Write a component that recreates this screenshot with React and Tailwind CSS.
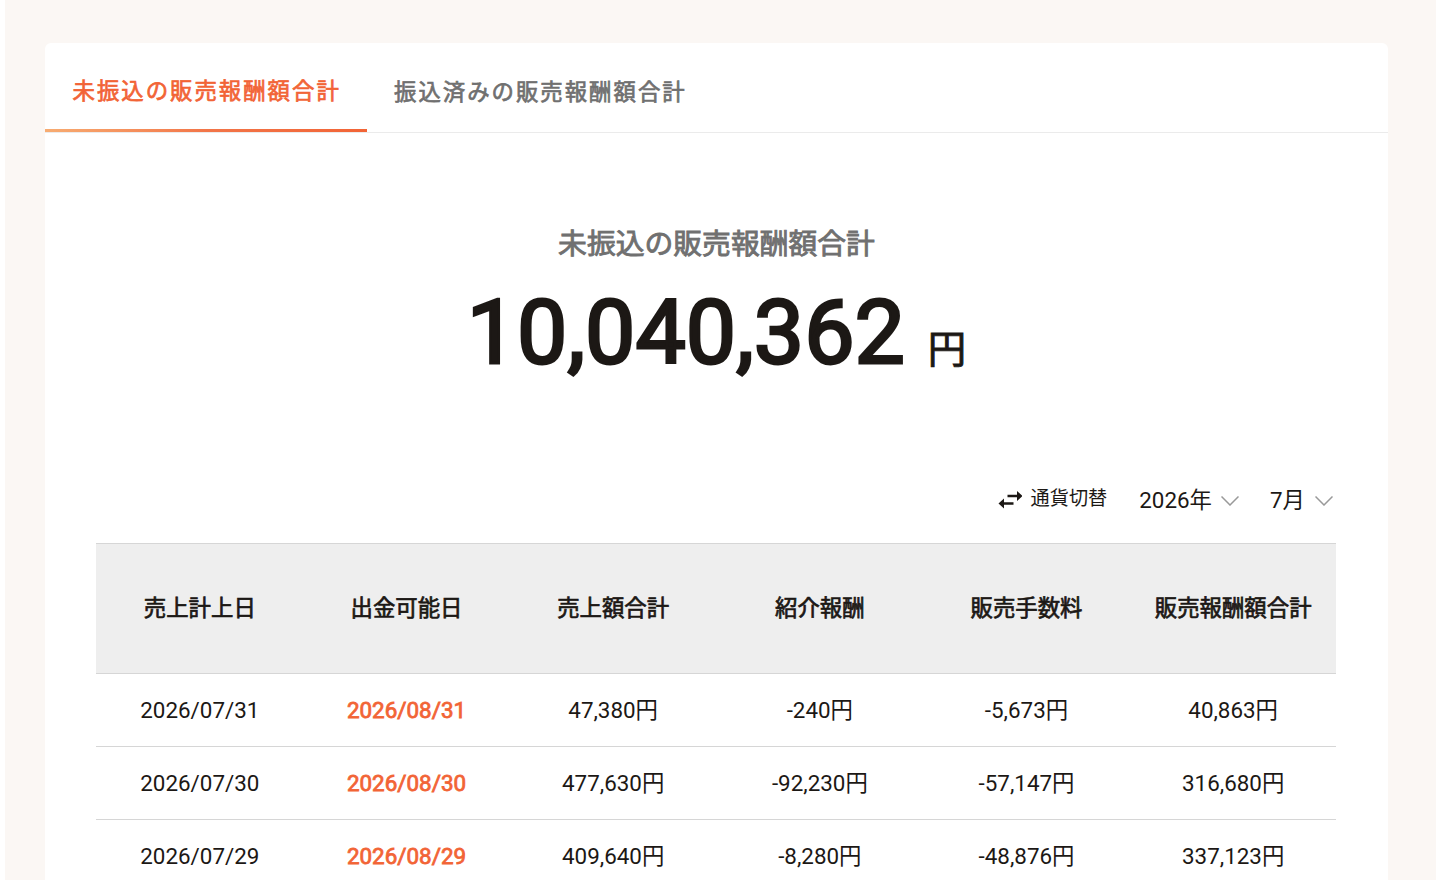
import React, { useState } from 'react'

const tabs = ['未振込の販売報酬額合計', '振込済みの販売報酬額合計']

const columns = ['売上計上日', '出金可能日', '売上額合計', '紹介報酬', '販売手数料', '販売報酬額合計']

const rows = [
  ['2026/07/31', '2026/08/31', '47,380円', '-240円', '-5,673円', '40,863円'],
  ['2026/07/30', '2026/08/30', '477,630円', '-92,230円', '-57,147円', '316,680円'],
  ['2026/07/29', '2026/08/29', '409,640円', '-8,280円', '-48,876円', '337,123円'],
]

function SwapIcon() {
  return (
    <svg width="24" height="20" viewBox="0 0 24 20" fill="none" stroke="#1c1815" strokeWidth="2.4" className="mt-[3px]">
      <path d="M9.5 6H20.5M15.5 13.5H4.5" />
      <path d="M19 0.9L24.5 6L19 11.1ZM6 8.4L0.5 13.5L6 18.6Z" fill="#1c1815" stroke="none" />
    </svg>
  )
}

function Chevron() {
  return (
    <svg width="18" height="10" viewBox="0 0 18 10" fill="none" stroke="#999999" strokeWidth="1.5">
      <path d="M0.5 0.5L9 9L17.5 0.5" />
    </svg>
  )
}

export default function App() {
  const [active, setActive] = useState(0)

  return (
    <div className="h-[880px] overflow-hidden bg-white pl-[5px] font-['Roboto','Noto_Sans_CJK_JP',sans-serif] text-[#1c1815]">
      <div className="h-full bg-[#fbf7f4] pt-[43px] pl-10 pr-12">
        <div className="h-[900px] rounded-t-md bg-white">
          <div className="flex h-[90px] border-b border-[#ebebeb]">
            {tabs.map((tab, i) => (
              <button
                key={tab}
                onClick={() => setActive(i)}
                className={
                  i === active
                    ? 'flex w-[322px] flex-col whitespace-nowrap text-[22.4px] tracking-[2px] text-[#f26436] [-webkit-text-stroke:0.7px]'
                    : 'flex w-[346px] flex-col whitespace-nowrap text-[22.4px] tracking-[2px] text-[#707070] [-webkit-text-stroke:0.7px]'
                }
              >
                <span className={i === active ? 'flex h-[86px] items-center pl-[27.5px] pt-3' : 'flex h-[86px] items-center pl-[27px] pt-[14px]'}>{tab}</span>
                {i === active && <span className="h-[3px] w-full bg-gradient-to-r from-[#f7ac72] via-[#f27548] via-50% to-[#f26436]" />}
              </button>
            ))}
          </div>

          <div className="flex h-[332px] flex-col items-center pt-[90px]">
            <h2 className="text-[28.8px] leading-[42px] text-[#707070] [-webkit-text-stroke:0.9px]">{tabs[active]}</h2>
            <p className="mt-[3px] flex items-baseline text-[89.6px] leading-[130px]">
              <span className="[-webkit-text-stroke:2.8px]">10,040,362</span>
              <span className="ml-[23px] text-[38.4px] [-webkit-text-stroke:0.9px]">円</span>
            </p>
          </div>

          <div className="mr-[55.5px] flex h-[78px] items-center justify-end pb-1.5">
            <button className="flex items-center gap-[9px] pb-1 text-[19.2px]">
              <SwapIcon />
              通貨切替
            </button>
            <button className="ml-8 flex items-center gap-[9px] text-[22.4px]">
              2026年
              <Chevron />
            </button>
            <button className="ml-[31px] flex items-center gap-[9.5px] text-[22.4px]">
              7月
              <Chevron />
            </button>
          </div>

          <div className="ml-[51px] w-[1240px] text-center text-[22.4px]">
            <div className="grid h-[131px] grid-cols-6 items-center border-y border-[#d6d6d6] bg-[#eeeeee] pt-px [-webkit-text-stroke:0.7px]">
              {columns.map((name) => (
                <div key={name} className="whitespace-nowrap pl-px">{name}</div>
              ))}
            </div>
            {rows.map((row) => (
              <div key={row[0]} className="grid h-[73px] grid-cols-6 items-center border-b border-[#d6d6d6] pt-0.5">
                {row.map((cell, i) => (
                  <div key={i} className={i === 1 ? 'pl-px text-[#f26436] [-webkit-text-stroke:0.8px]' : 'pl-px'}>{cell}</div>
                ))}
              </div>
            ))}
          </div>
        </div>
      </div>
    </div>
  )
}
